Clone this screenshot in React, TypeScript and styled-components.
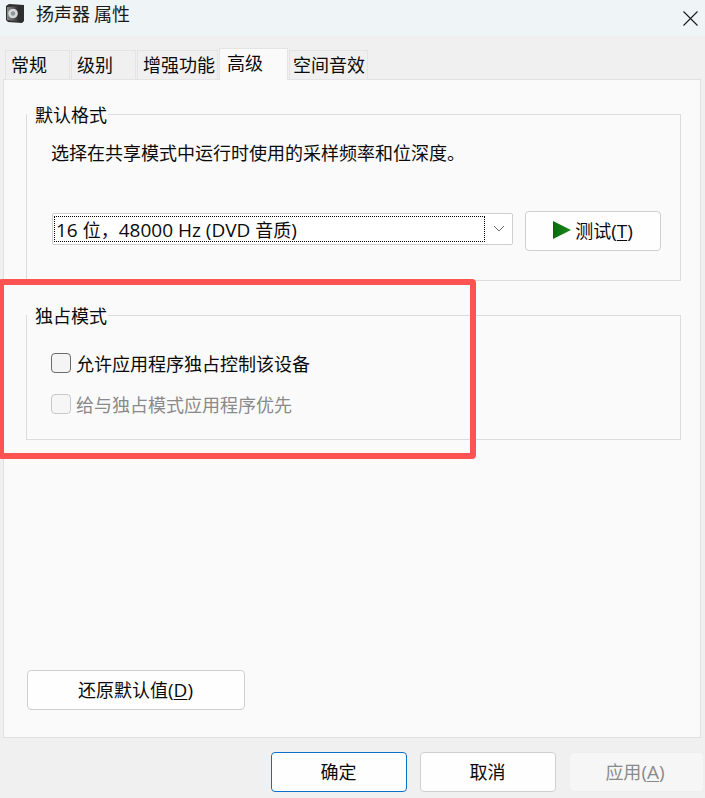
import React from "react";
import styled, { createGlobalStyle } from "styled-components";

const Global = createGlobalStyle`
  html, body { margin: 0; padding: 0; }
  body { width: 705px; height: 798px; overflow: hidden; background: #f0f0f0; }
  * { box-sizing: border-box; }
`;

const Window = styled.div`
  position: relative;
  width: 705px;
  height: 798px;
  display: flex;
  flex-direction: column;
  background: #f0f0f0;
  color: #000;
  font-family: "Noto Sans CJK SC", "Noto Sans", sans-serif;
  font-size: 18px;
  line-height: 24px;
`;

const TitleBar = styled.div`
  height: 36px;
  flex: none;
  display: flex;
  align-items: flex-start;
  padding: 3px 7px 0 6px;
  background: #eff4f7;
`;

const TitleText = styled.span`
  margin-left: 11px;
  font-size: 18px;
  color: #1a1a1a;
  flex: 1;
  line-height: 20px;
`;

const CloseWrap = styled.span`
  display: block;
  margin-top: 3px;
  height: 15px;
`;

const Tabs = styled.div`
  height: 32px;
  margin-top: 12px;
  padding-left: 5px;
  display: flex;
  align-items: flex-end;
  flex: none;
  position: relative;
  z-index: 1;
`;

const Tab = styled.div<{ $w: number; $active?: boolean; $pad?: number }>`
  width: ${(p) => p.$w}px;
  height: ${(p) => (p.$active ? 32 : 30)}px;
  margin-right: 1px;
  padding-left: ${(p) => p.$pad ?? 5}px;
  background: ${(p) => (p.$active ? "#fafafa" : "#f0f0f0")};
  border: 1px solid #e4e4e4;
  border-bottom: ${(p) => (p.$active ? "none" : "1px solid #e4e4e4")};
  line-height: ${(p) => (p.$active ? 26 : 27)}px;
  white-space: nowrap;
  color: #0a0a0a;
`;

const Panel = styled.div`
  width: 698px;
  height: 659px;
  margin: -1px 0 0 3px;
  flex: none;
  background: #fafafa;
  border: 1px solid #e0e0e0;
  padding: 22px 19px 27px 22px;
  display: flex;
  flex-direction: column;
`;

const Group = styled.fieldset<{ $h: number; $mb?: number }>`
  height: ${(p) => p.$h}px;
  margin: 0 0 ${(p) => p.$mb ?? 0}px;
  padding: 0 0 0 24px;
  border: 1px solid #dcdcdc;
  min-inline-size: 0;
  position: relative;
`;

const Legend = styled.legend`
  margin-left: -24px;
  padding: 0 1px 0 8px;
  line-height: 24px;
  height: 24px;
  color: #0a0a0a;
`;

const Description = styled.div`
  margin-top: 14px;
  height: 24px;
  color: #0a0a0a;
`;

const FormatRow = styled.div`
  display: flex;
  align-items: flex-start;
  margin-left: 1px;
  margin-top: 47px;
`;

const Select = styled.div`
  width: 461px;
  height: 32px;
  margin-top: 2px;
  display: flex;
  background: #fff;
  border: 1px solid #cfcfcf;
  border-radius: 2px;
  padding: 2px 0 2px 1px;
`;

const SelectValue = styled.div`
  width: 431px;
  height: 26px;
  border: 1px dotted #000;
  padding-left: 1px;
  line-height: 24px;
  white-space: nowrap;
  color: #0a0a0a;
`;

const Latin = styled.span`
  font-family: "Open Sans", "Noto Sans", sans-serif;
  font-size: 19px;
`;

const Chevron = styled.div`
  flex: 1;
  display: flex;
  align-items: center;
  justify-content: center;
  padding-bottom: 2px;
`;

const Button = styled.button<{ $w: number; $primary?: boolean; $disabled?: boolean }>`
  width: ${(p) => p.$w}px;
  height: 40px;
  flex: none;
  display: flex;
  align-items: center;
  justify-content: center;
  padding: 0 ${(p) => (p.$disabled ? 3 : 1)}px 2px 0;
  font: inherit;
  color: ${(p) => (p.$disabled ? "#8a8a8a" : "#0a0a0a")};
  background: ${(p) => (p.$disabled ? "#f6f6f6" : "#fefefe")};
  border: 1px solid ${(p) => (p.$primary ? "#0a6fc9" : p.$disabled ? "#efefef" : "#cfcfcf")};
  border-radius: 4px;
`;

const TestButton = styled(Button)`
  margin-left: 12px;
  gap: 4px;
  padding-right: 0;
`;

const RestoreButton = styled(Button)`
  margin-left: 1px;
`;

const CheckRow = styled.label<{ $disabled?: boolean; $top: number }>`
  display: flex;
  align-items: center;
  height: 24px;
  margin-top: ${(p) => p.$top}px;
  color: ${(p) => (p.$disabled ? "#8a8a8a" : "#0a0a0a")};
`;

const CheckBox = styled.span<{ $disabled?: boolean }>`
  width: 20px;
  height: 20px;
  margin-right: 5px;
  flex: none;
  border-radius: 4px;
  background: ${(p) => (p.$disabled ? "#f6f6f6" : "#f4f4f4")};
  border: 1px solid ${(p) => (p.$disabled ? "#c8c8c8" : "#6b6b6b")};
`;

const Spacer = styled.div`
  flex: 1;
`;

const Footer = styled.div`
  display: flex;
  justify-content: flex-end;
  gap: 13px;
  padding: 14px 1px 0 0;
`;

const Callout = styled.div`
  position: absolute;
  left: -2px;
  top: 279px;
  width: 478px;
  height: 180px;
  border: 6px solid #fd5353;
  border-radius: 4px;
  pointer-events: none;
`;

const Key = styled.u`
  text-underline-offset: 2px;
`;

const SpeakerIcon = () => (
  <svg width="19" height="21" viewBox="0 0 19 21">
    <defs>
      <linearGradient id="case" x1="0" y1="0" x2="1" y2="0">
        <stop offset="0" stopColor="#8a8a8a" />
        <stop offset="1" stopColor="#2a2a2a" />
      </linearGradient>
    </defs>
    <path d="M0 3 L3 1 L18 2 L18 18 L16 20 L2 19 L0 17 Z" fill="#2e2e2e" />
    <path d="M1 4 L13 3 L13 19 L1 17 Z" fill="url(#case)" />
    <circle cx="7" cy="10.5" r="4.8" fill="#d5d8da" />
    <circle cx="7" cy="10.5" r="2.2" fill="#8e9396" />
  </svg>
);

const CloseIcon = () => (
  <svg width="15" height="15" viewBox="0 0 15 15">
    <path d="M0.5 0.5 L14.5 14.5 M14.5 0.5 L0.5 14.5" stroke="#1a1a1a" strokeWidth="1.1" fill="none" />
  </svg>
);

const ChevronIcon = () => (
  <svg width="12" height="7" viewBox="0 0 12 7">
    <path d="M1 1 L6 6 L11 1" stroke="#6e6e6e" strokeWidth="1" fill="none" />
  </svg>
);

const PlayIcon = () => (
  <svg width="18" height="18" viewBox="0 0 18 18">
    <defs>
      <linearGradient id="play" x1="0" y1="0" x2="1" y2="0">
        <stop offset="0" stopColor="#0a6a0a" />
        <stop offset="1" stopColor="#1c8a1c" />
      </linearGradient>
    </defs>
    <path d="M0 0 L18 9 L0 18 Z" fill="url(#play)" />
  </svg>
);

export default function App() {
  return (
    <Window>
      <Global />
      <TitleBar>
        <SpeakerIcon />
        <TitleText>扬声器 属性</TitleText>
        <CloseWrap>
          <CloseIcon />
        </CloseWrap>
      </TitleBar>
      <Tabs>
        <Tab $w={65}>常规</Tab>
        <Tab $w={65}>级别</Tab>
        <Tab $w={81}>增强功能</Tab>
        <Tab $w={69} $active $pad={7}>高级</Tab>
        <Tab $w={79} $pad={3}>空间音效</Tab>
      </Tabs>
      <Panel>
        <Group $h={179} $mb={22}>
          <Legend>默认格式</Legend>
          <Description>选择在共享模式中运行时使用的采样频率和位深度。</Description>
          <FormatRow>
            <Select>
              <SelectValue>
                <Latin>16 </Latin>位，<Latin>48000 Hz (DVD </Latin>音质<Latin>)</Latin>
              </SelectValue>
              <Chevron>
                <ChevronIcon />
              </Chevron>
            </Select>
            <TestButton $w={136}>
              <PlayIcon />
              <span>
                测试<Latin>(<Key>T</Key>)</Latin>
              </span>
            </TestButton>
          </FormatRow>
        </Group>
        <Group $h={137}>
          <Legend>独占模式</Legend>
          <CheckRow $top={24}>
            <CheckBox />
            允许应用程序独占控制该设备
          </CheckRow>
          <CheckRow $disabled $top={17}>
            <CheckBox $disabled />
            给与独占模式应用程序优先
          </CheckRow>
        </Group>
        <Spacer />
        <RestoreButton $w={218}>
          <span>
            还原默认值<Latin>(<Key>D</Key>)</Latin>
          </span>
        </RestoreButton>
      </Panel>
      <Footer>
        <Button $w={136} $primary>确定</Button>
        <Button $w={136}>取消</Button>
        <Button $w={135} $disabled>
          <span>
            应用<Latin>(<Key>A</Key>)</Latin>
          </span>
        </Button>
      </Footer>
      <Callout />
    </Window>
  );
}
